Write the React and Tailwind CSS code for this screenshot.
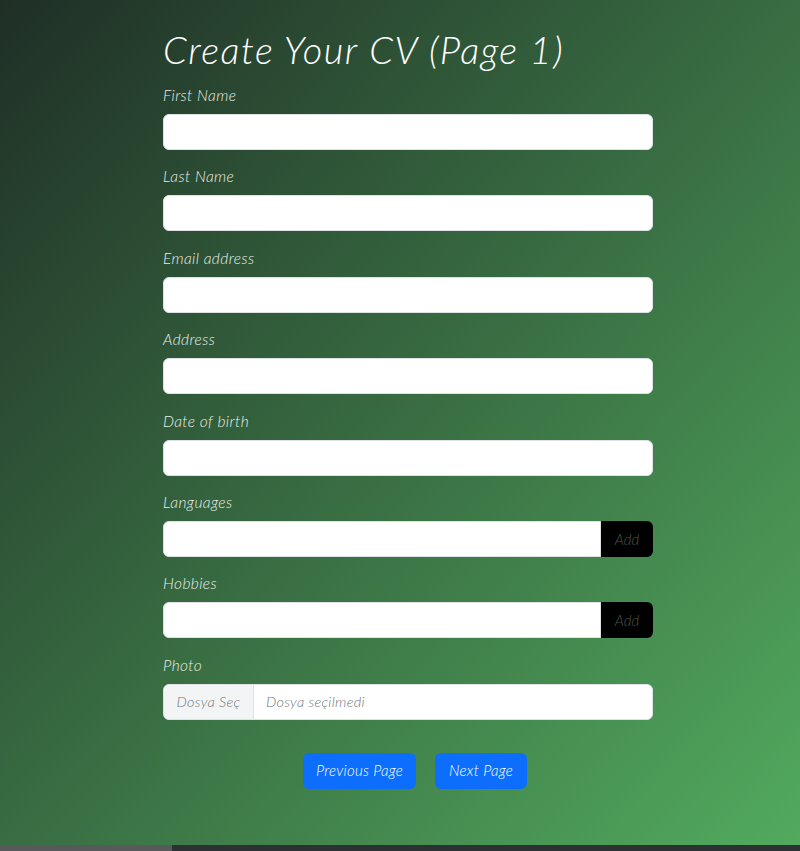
import React from "react";

const font = { fontFamily: "Lato, 'Open Sans', sans-serif" };

function Field({ label, children }) {
  return (
    <div className="mb-[15.4px]">
      <label className="block text-[15.5px] leading-[22px] italic font-light tracking-[0.4px] text-[#e8efe8] mb-[8px]">{label}</label>
      {children}
    </div>
  );
}

function TextInput() {
  return <div className="h-[36px] w-full bg-white rounded-[6px] border border-[#dee2e6]" />;
}

function AddInput() {
  return (
    <div className="flex h-[36px] w-full">
      <div className="flex-1 bg-white rounded-l-[6px] border border-[#dee2e6]" />
      <button className="w-[52px] h-full bg-black rounded-r-[6px] text-[15px] italic font-light text-[#4a544e] flex items-center justify-center">
        Add
      </button>
    </div>
  );
}

export default function App() {
  return (
    <div style={font} className="w-[800px] h-[851px] flex flex-col overflow-hidden">
      <div className="h-[845px] bg-[linear-gradient(to_bottom_right,#1f2f26,#52aa5e)]">
        <div className="w-[490px] ml-[163px] pt-[25px]">
          <h1 className="text-[38px] leading-[48px] italic font-light text-white tracking-[1.5px] mb-[11px]">
            Create Your CV (Page 1)
          </h1>
          <Field label="First Name"><TextInput /></Field>
          <Field label="Last Name"><TextInput /></Field>
          <Field label="Email address"><TextInput /></Field>
          <Field label="Address"><TextInput /></Field>
          <Field label="Date of birth"><TextInput /></Field>
          <Field label="Languages"><AddInput /></Field>
          <Field label="Hobbies"><AddInput /></Field>
          <Field label="Photo">
            <div className="flex h-[36px] w-full bg-white rounded-[6px] border border-[#dee2e6] overflow-hidden">
              <div className="w-[90px] bg-[#f3f4f6] border-r border-[#dee2e6] flex items-center justify-center text-[14.5px] italic font-light tracking-[0.3px] text-[#6c757d]">
                Dosya Seç
              </div>
              <div className="flex items-center pl-[12px] text-[14.5px] italic font-light tracking-[0.3px] text-[#6c757d]">
                Dosya seçilmedi
              </div>
            </div>
          </Field>
          <div className="flex justify-center gap-[19px] mt-[33px] pl-[14px]">
            <button className="h-[36px] w-[113px] bg-[#0d6efd] rounded-[6px] text-white text-[15px] italic font-light tracking-[0.3px]">
              Previous Page
            </button>
            <button className="h-[36px] w-[92px] bg-[#0d6efd] rounded-[6px] text-white text-[15px] italic font-light tracking-[0.3px]">
              Next Page
            </button>
          </div>
        </div>
      </div>
      <div className="h-[6px] flex bg-[#2e3133]">
        <div className="w-[172px] bg-[#58595b]" />
      </div>
    </div>
  );
}
